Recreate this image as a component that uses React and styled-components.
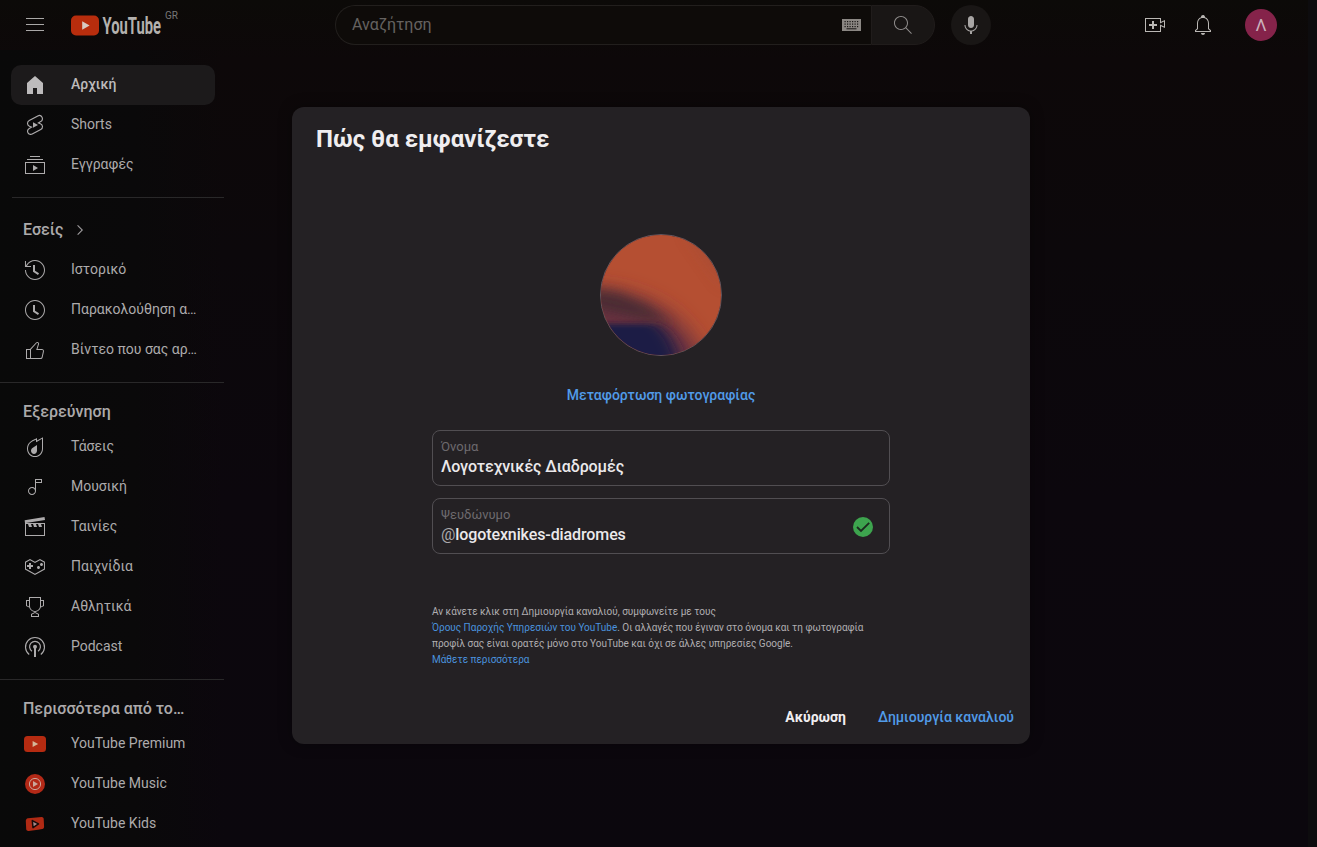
import React from "react";
import styled, { createGlobalStyle } from "styled-components";

const GlobalStyle = createGlobalStyle`
  * { box-sizing: border-box; }
  body { margin: 0; background: #0b080c; overflow: hidden; }
  body, button, input { font-family: Roboto, "Liberation Sans", sans-serif; }
`;

const Page = styled.div`
  position: relative;
  display: flex;
  flex-direction: column;
  width: 1317px;
  height: 847px;
  overflow: hidden;
  color: #b2b0b1;
  background:
    linear-gradient(#0d0c0e, #0d0c0e) right / 9px 100% no-repeat,
    linear-gradient(180deg, #0c0a08 0, #0d0809 60px, #0c080b 250px, #0c070d 500px, #0b070d 100%);
`;

const Masthead = styled.header`
  display: flex;
  align-items: center;
  justify-content: space-between;
  height: 50px;
  padding: 0 40px 0 23px;
`;

const Start = styled.div`
  display: flex;
  align-items: center;
  width: 312px;
`;

const Brand = styled.div`
  display: flex;
  align-items: flex-start;
  margin-left: 24px;
`;

const Country = styled.span`
  margin: -1px 0 0 1px;
  font-size: 10px;
  line-height: 12px;
  color: #777;
`;

const Center = styled.div`
  display: flex;
  align-items: center;
  flex: 1;
`;

const SearchBox = styled.div`
  display: flex;
  align-items: center;
  justify-content: space-between;
  width: 536px;
  height: 40px;
  padding: 0 10px 0 16px;
  border: 1px solid #221f1d;
  border-right: 0;
  border-radius: 20px 0 0 20px;
  background: #0e0b09;
  font-size: 16px;
  color: #656260;
`;

const Placeholder = styled.span`
  position: relative;
  top: -1px;
`;

const SearchButton = styled.div`
  display: flex;
  align-items: center;
  justify-content: center;
  width: 64px;
  height: 40px;
  border: 1px solid #201c1b;
  border-radius: 0 20px 20px 0;
  background: #191615;
  color: #8f8c8b;
`;

const MicButton = styled.div`
  display: flex;
  align-items: center;
  justify-content: center;
  width: 40px;
  height: 40px;
  margin-left: 16px;
  border-radius: 50%;
  background: #191615;
  color: #a8a5a4;
`;

const End = styled.div`
  display: flex;
  align-items: center;
  gap: 24px;
`;

const Account = styled.div`
  width: 32px;
  height: 32px;
  margin-left: 6px;
  border-radius: 50%;
  background: #85234a;
  color: #cbb0bb;
  font-size: 17px;
  line-height: 33px;
  text-align: center;
`;

const Guide = styled.nav`
  display: flex;
  flex-direction: column;
  width: 224px;
  height: 797px;
  padding-top: 15px;
  background: linear-gradient(90deg, #090909 0, #0a090a 60%, #0a080a00 100%);
`;

const Section = styled.section`
  display: flex;
  flex: none;
  flex-direction: column;
  padding: 0 9px 12px 11px;
`;

const Divider = styled.div`
  flex: none;
  height: 1px;
  margin-left: ${(p) => p.$inset || 0}px;
  margin-bottom: 12px;
  background: #292829;
`;

const Entry = styled.div`
  display: flex;
  align-items: center;
  height: 40px;
  padding: 0 12px;
  border-radius: 10px;
  gap: 24px;
  background: ${(p) => (p.$active ? "#1c1a1b" : "transparent")};
  color: ${(p) => (p.$active ? "#bdbbbc" : "#adabac")};
  font-size: 14px;
  font-weight: ${(p) => (p.$active ? 500 : 400)};
`;

const Label = styled.span`
  padding-bottom: 2px;
  white-space: nowrap;
`;

const Heading = styled.h3`
  display: flex;
  align-items: center;
  height: ${(p) => p.$height || 32}px;
  margin: 0;
  padding: 0 12px 0;
  font-size: 16px;
  font-weight: 500;
  color: #acaaab;
  white-space: nowrap;
`;

const Dialog = styled.main`
  position: absolute;
  left: 292px;
  top: 107px;
  display: flex;
  flex-direction: column;
  width: 738px;
  height: 637px;
  border-radius: 12px;
  background: #242124;
  box-shadow: 0 0 14px rgba(0, 0, 0, 0.35);
`;

const Title = styled.h1`
  margin: 0;
  padding: 16px 24px 0;
  font-size: 24px;
  line-height: 32px;
  font-weight: 700;
  color: #f0eef0;
`;

const Form = styled.div`
  display: flex;
  flex-direction: column;
  align-items: center;
  width: 458px;
  margin: 79px 0 0 140px;
`;

const Photo = styled.div`
  width: 122px;
  height: 122px;
  border: 1px solid #65545c;
  border-radius: 50%;
  overflow: hidden;
`;

const Upload = styled.a`
  margin: 29px 0 25px;
  font-size: 14px;
  line-height: 20px;
  font-weight: 500;
  color: #519be8;
`;

const Field = styled.div`
  display: flex;
  align-items: center;
  justify-content: space-between;
  width: 458px;
  height: 56px;
  margin-bottom: 12px;
  padding: 0 16px 0 8px;
  border: 1px solid #514e52;
  border-radius: 8px;
`;

const FieldLabel = styled.div`
  font-size: 13px;
  line-height: 18px;
  color: #6d6a6e;
`;

const FieldValue = styled.div`
  margin-bottom: 1px;
  font-size: 16px;
  line-height: 22px;
  font-weight: 500;
  letter-spacing: -0.1px;
  color: #ebe9eb;
`;

const At = styled.span`
  font-weight: 400;
  color: #aaa8ab;
`;

const Terms = styled.p`
  width: 458px;
  margin: 38px 0 0;
  font-size: 10px;
  line-height: 16px;
  letter-spacing: -0.01px;
  color: #b0aeb1;
  white-space: nowrap;
`;

const Link = styled.a`
  color: #4a92de;
`;

const Actions = styled.div`
  display: flex;
  justify-content: flex-end;
  gap: 32px;
  margin-top: auto;
  padding: 0 16px 17px;
`;

const Action = styled.button`
  padding: 0;
  border: 0;
  background: none;
  font-size: 14px;
  line-height: 20px;
  font-weight: ${(p) => (p.$primary ? 500 : 700)};
  color: ${(p) => (p.$primary ? "#519be8" : "#f0eef0")};
`;

const Svg = styled.svg`
  flex: none;
  display: block;
  fill: ${(p) => p.$color || "currentColor"};
`;

const ChevronSvg = styled(Svg)`
  margin-left: 8px;
`;

const CheckSvg = styled(Svg)`
  margin-top: 2px;
`;

const paths = {
  menu: "M21 6H3V5h18v1zm0 5H3v1h18v-1zm0 6H3v1h18v-1z",
  home: "M4 21V10.08l8-6.96 8 6.96V21h-6v-6h-4v6H4z",
  subs: "M10 18v-6l5 3-5 3zm7-15H7v1h10V3zm3 3H4v1h16V6zm2 3H2v12h20V9zM3 10h18v10H3V10z",
  history:
    "M14.97 16.95 10 13.87V7h2v5.76l4.03 2.49-1.06 1.7zM22 12c0 5.51-4.49 10-10 10S2 17.51 2 12h1c0 4.96 4.04 9 9 9s9-4.04 9-9-4.04-9-9-9C8.81 3 5.92 4.64 4.28 7.38c-.11.18-.22.37-.31.56L3.94 8H8v1H1.96V3h1v4.74c.04-.09.07-.17.11-.25.11-.22.23-.42.35-.63C5.22 3.86 8.51 2 12 2c5.51 0 10 4.49 10 10z",
  later:
    "M14.97 16.95 10 13.87V7h2v5.76l4.03 2.49-1.06 1.7zM12 3c-4.96 0-9 4.04-9 9s4.04 9 9 9 9-4.04 9-9-4.04-9-9-9m0-1c5.52 0 10 4.48 10 10s-4.48 10-10 10S2 17.52 2 12 6.48 2 12 2z",
  liked:
    "M18.77 11h-4.23l1.52-4.94C16.38 5.03 15.54 4 14.38 4c-.58 0-1.14.24-1.52.65L7 11H3v10h14.43c1.06 0 1.98-.67 2.19-1.61l1.34-6C21.23 12.15 20.18 11 18.77 11zM7 20H4v-8h3v8zm12.98-6.83-1.34 6c-.1.48-.61.83-1.21.83H8v-8.61l5.6-6.06c.19-.21.48-.33.78-.33.26 0 .5.11.63.3.07.1.15.26.09.47l-1.52 4.94L13.18 12h5.59c.46 0 .87.17 1.09.47.13.17.23.4.12.7z",
  trending:
    "M19 3.87v9.77C19 17.7 15.86 21 12 21s-7-3.3-7-7.37v-.13c0-1.06.22-2.13.62-3.09.5-1.19 1.29-2.21 2.27-2.97.85-.66 1.83-1.14 2.87-1.65.39-.19.77-.38 1.15-.58.36-.19.73-.38 1.09-.56v2.57l1.49-.83L19 3.87M20 2.19l-6 3.33V3c-.85.44-1.7.88-2.55 1.33-1.41.74-2.9 1.34-4.17 2.32-1.13.87-2.02 2.05-2.58 3.37-.46 1.09-.7 2.29-.7 3.48v.14C4 18.26 7.58 22 12 22s8-3.74 8-8.36V2.19zM9.45 12.89 14 10v5.7c0 1.82-1.34 3.3-3 3.3s-3-1.47-3-3.3c0-1.19.58-2.23 1.45-2.81z",
  music:
    "M12 4v9.38c-.73-.84-1.8-1.38-3-1.38-2.21 0-4 1.79-4 4s1.79 4 4 4 4-1.79 4-4V8h6V4h-7zM9 19c-1.66 0-3-1.34-3-3s1.34-3 3-3 3 1.34 3 3-1.34 3-3 3zm9-12h-5V5h5v2z",
  movies: "m22.01 4.91-.5-2.96L1.64 5.19 2 8v13h20V8H3.06l18.95-3.09zM5 9l1 3h3L8 9h2l1 3h3l-1-3h2l1 3h3l-1-3h3v11H3V9h2z",
  gaming:
    "M10 12H8v2H6v-2H4v-2h2V8h2v2h2v2zm7 .5c0-.83-.67-1.5-1.5-1.5s-1.5.67-1.5 1.5.67 1.5 1.5 1.5 1.5-.67 1.5-1.5zm3-3c0-.83-.67-1.5-1.5-1.5S17 8.67 17 9.5s.67 1.5 1.5 1.5 1.5-.67 1.5-1.5zm-3.03-4.35-4.5 2.53-.49.27-.49-.27-4.5-2.53L3 7.39v6.43l8.98 5.04 8.98-5.04V7.39l-3.99-2.24m0-1.15 4.99 2.8v7.6L11.98 20 2 14.4V6.8L6.99 4l4.99 2.8L16.97 4z",
  sports:
    "M18 5V2H6v3H3v6l3.23 1.61c.7 2.5 2.97 4.34 5.69 4.38L8 19v3h8v-3l-3.92-2.01c2.72-.04 4.99-1.88 5.69-4.38L21 11V5h-3zM6 11.38l-2-1V6h2v5.38zM15 21H9v-1.39l3-1.54 3 1.54V21zm2-10c0 2.76-2.24 5-5 5s-5-2.24-5-5V3h10v8zm3-.62-2 1V6h2v4.38z",
  search:
    "m20.87 20.17-5.59-5.59C16.35 13.35 17 11.75 17 10c0-3.87-3.13-7-7-7s-7 3.13-7 7 3.13 7 7 7c1.75 0 3.35-.65 4.58-1.71l5.59 5.59.7-.71zM10 16c-3.31 0-6-2.69-6-6s2.69-6 6-6 6 2.69 6 6-2.69 6-6 6z",
  mic: "M12 3c-1.66 0-3 1.37-3 3.07v5.86c0 1.7 1.34 3.07 3 3.07s3-1.37 3-3.07V6.07C15 4.37 13.66 3 12 3zm6.5 9h-1c0 3.03-2.47 5.5-5.5 5.5S6.5 15.03 6.5 12h-1c0 3.24 2.39 5.93 5.5 6.41V21h2v-2.59c3.11-.48 5.5-3.17 5.5-6.41z",
  create: "M14 13h-3v3H9v-3H6v-2h3V8h2v3h3v2zm3-7H3v12h14v-6.39l4 1.83V8.56l-4 1.83V6m1-1v3.83L22 7v8l-4-1.83V19H2V5h16z",
  bell: "M10 20h4c0 1.1-.9 2-2 2s-2-.9-2-2zm10-2.65V19H4v-1.65l2-1.88v-5.15C6 7.4 7.56 5.1 10 4.34v-.38c0-1.42 1.49-2.5 2.99-1.76.65.32 1.01 1.03 1.01 1.76v.39c2.44.75 4 3.06 4 5.98v5.15l2 1.87zm-1 .42-2-1.88v-5.47c0-2.47-1.19-4.36-3.13-5.1-1.26-.53-2.64-.5-3.84.03C8.15 6.11 7 7.99 7 10.42v5.47l-2 1.88V18h14v-.23z",
  chevron: "m9.4 18.4-.7-.7 5.6-5.6-5.7-5.7.7-.7 6.4 6.4-6.3 6.3z",
};

const drawings = {
  shorts: (
    <>
      <path d="M10 14.65v-5.3L15 12l-5 2.65z" />
      <path
        fill="none"
        stroke="currentColor"
        strokeWidth="1.15"
        d="M17.4 10.75 15.45 9.85l2.3-1.25c1.55-.82 2.15-2.75 1.32-4.3s-2.75-2.15-4.3-1.32L6.25 7.45c-1.13.6-1.8 1.75-1.75 3 .06 1.2.8 2.28 1.9 2.77l2.15.93-2.3 1.25c-1.55.82-2.15 2.75-1.32 4.3s2.75 2.15 4.3 1.32l8.5-4.5c1.13-.6 1.82-1.75 1.77-3-.06-1.2-.8-2.28-2.1-2.77z"
      />
    </>
  ),
  podcast: (
    <>
      <circle cx="12" cy="11.8" r="2" />
      <path d="M11 13h2v9h-2z" />
      <path
        fill="none"
        stroke="currentColor"
        strokeWidth="1.15"
        d="M9 16.2a5.4 5.4 0 1 1 6 0M6.2 19.5a9.5 9.5 0 1 1 11.6 0"
      />
    </>
  ),
  premium: (
    <>
      <rect x="1" y="4" width="22" height="16" rx="3.5" fill="#b52b11" />
      <path d="M9.6 8.9v6.2l5.6-3.1z" fill="#d5b798" />
    </>
  ),
  ytmusic: (
    <>
      <circle cx="12" cy="12" r="10" fill="#b32917" />
      <circle cx="12" cy="12" r="5.6" fill="none" stroke="#cba69b" />
      <path d="M10 9v6l5-3z" fill="#cba69b" />
    </>
  ),
  kids: (
    <>
      <path
        fill="#b02a14"
        d="M5 6.2 18.6 4.9c1.1-.1 1.9.7 2.1 1.8l.4 8.1c0 1.2-.6 2.1-1.8 2.2L15 17.8l-9.4 1.1c-1.2.1-2.2-.5-2.4-1.7L2.8 9c0-1.4.7-2.7 2.2-2.8z"
      />
      <path d="m9.3 8.6 6.2 3.2-5.5 3.8z" fill="#a88" stroke="#160b0a" strokeWidth="1.5" strokeLinejoin="round" />
    </>
  ),
};

const Icon = ({ name, size = 24, color }) => (
  <Svg width={size} height={size} viewBox="0 0 24 24" $color={color} aria-hidden="true">
    {drawings[name] || <path d={paths[name]} />}
  </Svg>
);

const Logo = () => (
  <Svg width="93" height="28" viewBox="0 -2 93 28">
    <rect x="0" y="2.5" width="28" height="20" rx="5" fill="#b82d0d" />
    <path d="M11.2 8.2v8.6l7.4-4.3z" fill="#d8cac2" />
    <text
      transform="translate(31.5 21) scale(0.65 1)"
      fill="#b4b1ae"
      fontFamily="Roboto, sans-serif"
      fontSize="23.5"
      fontWeight="700"
      textLength="90"
      lengthAdjust="spacingAndGlyphs"
    >
      YouTube
    </text>
  </Svg>
);

const keyColumns = [2.5, 5, 7.5, 10, 12.5, 15];

const Keyboard = () => (
  <Svg width="19" height="12" viewBox="0 0 19 12">
    <rect width="19" height="12" fill="#8b8783" />
    {[2, 4.5, 7].map((y) => keyColumns.map((x) => <rect key={x + "-" + y} x={x} y={y} width="1.2" height="1.2" fill="#191614" />))}
    <rect x="4.5" y="9.3" width="10" height="1" fill="#191614" />
  </Svg>
);

const Check = () => (
  <CheckSvg width="20" height="20" viewBox="0 0 20 20">
    <circle cx="10" cy="10" r="10" fill="#3da44e" />
    <path d="m4 10 4 4 8.2-8.2" fill="none" stroke="#1b2a1e" strokeWidth="1.8" />
  </CheckSvg>
);

const ProfileArt = () => (
  <Svg width="120" height="120" viewBox="0 0 120 120">
    <defs>
      <filter id="soft" x="-50%" y="-50%" width="200%" height="200%">
        <feGaussianBlur stdDeviation="10" />
      </filter>
      <filter id="softer" x="-50%" y="-50%" width="200%" height="200%">
        <feGaussianBlur stdDeviation="6" />
      </filter>
      <filter id="edge" x="-50%" y="-50%" width="200%" height="200%">
        <feGaussianBlur stdDeviation="8 2.5" />
      </filter>
    </defs>
    <rect width="120" height="120" fill="#b54f32" />
    <path d="M88-10 130 50V-10z" fill="#8f4a3b" filter="url(#soft)" opacity=".6" />
    <path d="M-20 54Q25 54 58 72T108 135H-20z" fill="#6b3240" filter="url(#soft)" />
    <path d="M-20 52 18 58 46 70 72 90 40 84-20 70z" fill="#3f2930" filter="url(#softer)" opacity=".8" />
    <path d="M-30 89H54Q72 97 80 130H-30z" fill="#1f1a45" filter="url(#edge)" />
  </Svg>
);

const mainEntries = [
  ["home", "Αρχική"],
  ["shorts", "Shorts"],
  ["subs", "Εγγραφές"],
];
const youEntries = [
  ["history", "Ιστορικό"],
  ["later", "Παρακολούθηση α…"],
  ["liked", "Βίντεο που σας αρ…"],
];
const exploreEntries = [
  ["trending", "Τάσεις"],
  ["music", "Μουσική"],
  ["movies", "Ταινίες"],
  ["gaming", "Παιχνίδια"],
  ["sports", "Αθλητικά"],
  ["podcast", "Podcast"],
];
const moreEntries = [
  ["premium", "YouTube Premium"],
  ["ytmusic", "YouTube Music"],
  ["kids", "YouTube Kids"],
];

const Entries = ({ items, active }) =>
  items.map(([icon, label]) => (
    <Entry key={icon} $active={icon === active}>
      <Icon name={icon} />
      <Label>{label}</Label>
    </Entry>
  ));

export default function App() {
  return (
    <Page>
      <GlobalStyle />
      <Masthead>
        <Start>
          <Icon name="menu" color="#aaa8a7" />
          <Brand>
            <Logo />
            <Country>GR</Country>
          </Brand>
        </Start>
        <Center>
          <SearchBox>
            <Placeholder>Αναζήτηση</Placeholder>
            <Keyboard />
          </SearchBox>
          <SearchButton>
            <Icon name="search" />
          </SearchButton>
          <MicButton>
            <Icon name="mic" />
          </MicButton>
        </Center>
        <End>
          <Icon name="create" color="#bab7b4" />
          <Icon name="bell" color="#bab7b4" />
          <Account>Λ</Account>
        </End>
      </Masthead>
      <Guide>
        <Section>
          <Entries items={mainEntries} active="home" />
        </Section>
        <Divider $inset={12} />
        <Section>
          <Heading $height={40}>
            <Label>Εσείς</Label>
            <ChevronSvg width="18" height="18" viewBox="0 0 24 24">
              <path d={paths.chevron} stroke="currentColor" strokeWidth="0.5" />
            </ChevronSvg>
          </Heading>
          <Entries items={youEntries} />
        </Section>
        <Divider />
        <Section>
          <Heading>Εξερεύνηση</Heading>
          <Entries items={exploreEntries} />
        </Section>
        <Divider />
        <Section>
          <Heading>Περισσότερα από το…</Heading>
          <Entries items={moreEntries} />
        </Section>
      </Guide>
      <Dialog>
        <Title>Πώς θα εμφανίζεστε</Title>
        <Form>
          <Photo>
            <ProfileArt />
          </Photo>
          <Upload>Μεταφόρτωση φωτογραφίας</Upload>
          <Field>
            <div>
              <FieldLabel>Όνομα</FieldLabel>
              <FieldValue>Λογοτεχνικές Διαδρομές</FieldValue>
            </div>
          </Field>
          <Field>
            <div>
              <FieldLabel>Ψευδώνυμο</FieldLabel>
              <FieldValue>
                <At>@</At>logotexnikes-diadromes
              </FieldValue>
            </div>
            <Check />
          </Field>
          <Terms>
            Αν κάνετε κλικ στη Δημιουργία καναλιού, συμφωνείτε με τους
            <br />
            <Link>Όρους Παροχής Υπηρεσιών του YouTube</Link>. Οι αλλαγές που έγιναν στο όνομα και τη φωτογραφία
            <br />
            προφίλ σας είναι ορατές μόνο στο YouTube και όχι σε άλλες υπηρεσίες Google.
            <br />
            <Link>Μάθετε περισσότερα</Link>
          </Terms>
        </Form>
        <Actions>
          <Action>Ακύρωση</Action>
          <Action $primary>Δημιουργία καναλιού</Action>
        </Actions>
      </Dialog>
    </Page>
  );
}
